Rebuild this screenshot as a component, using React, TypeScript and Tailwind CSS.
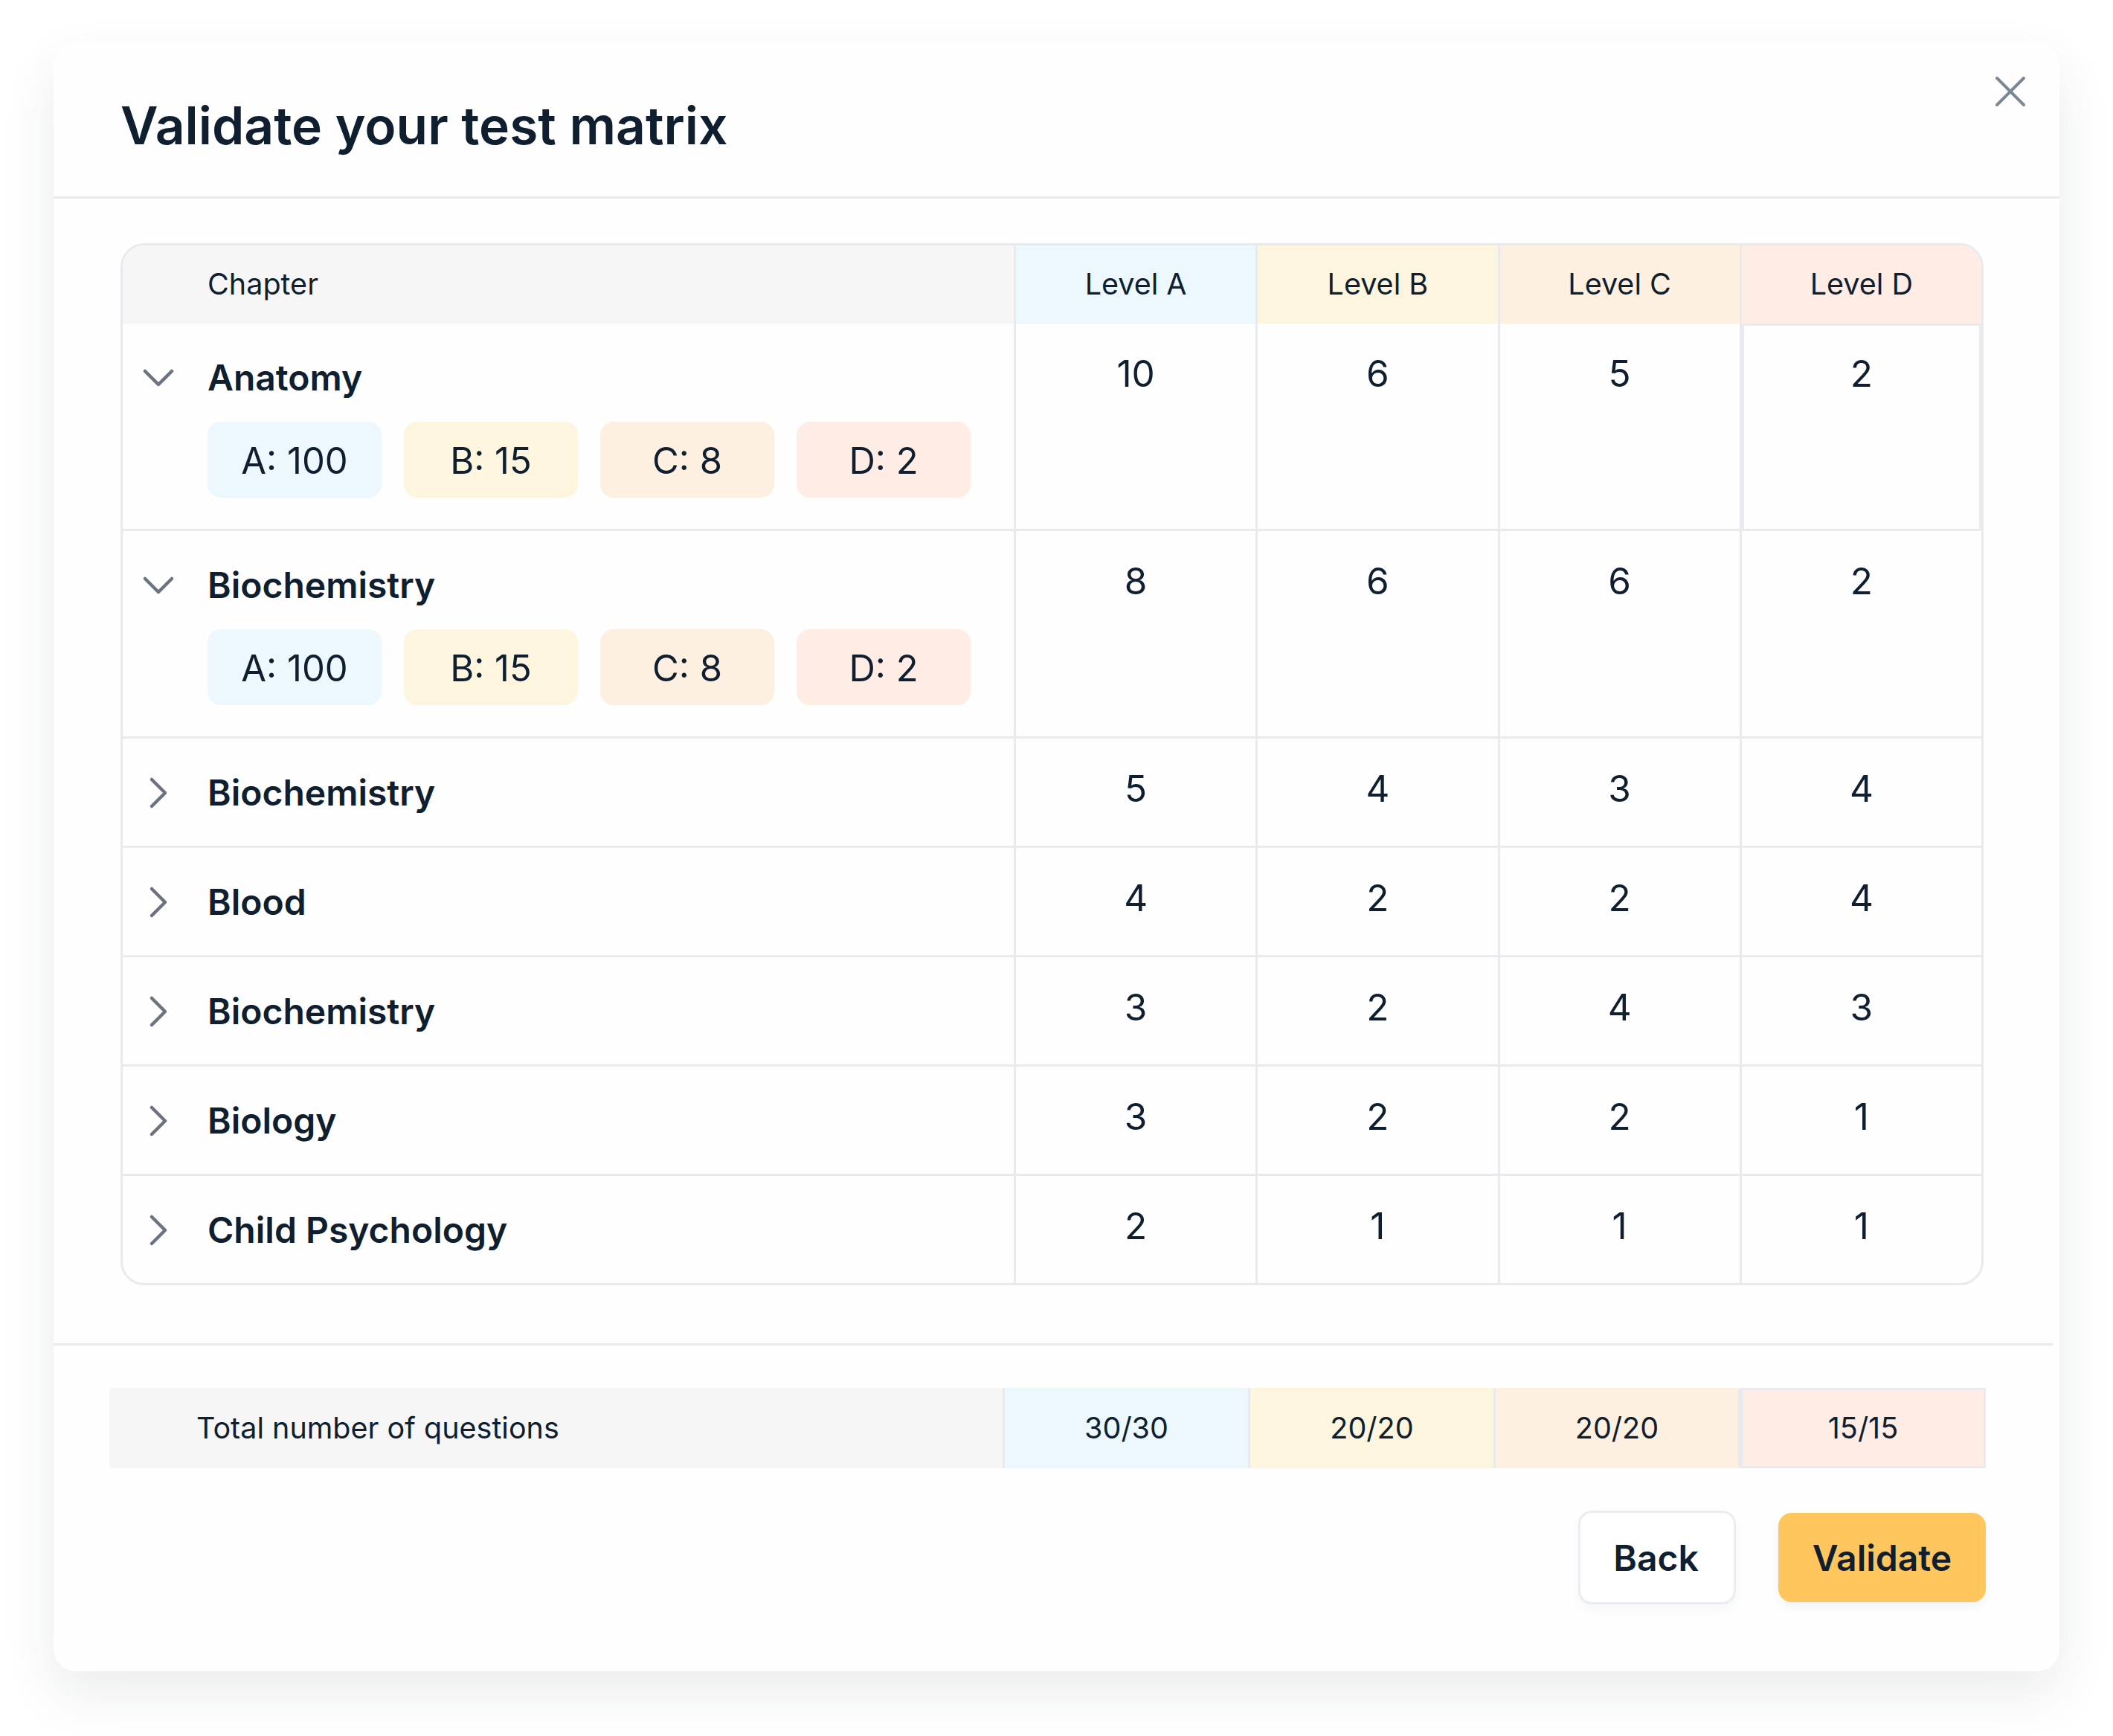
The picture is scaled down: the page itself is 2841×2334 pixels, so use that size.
import { ChevronDown, ChevronRight, X } from "lucide-react";

const levels = [
  { name: "Level A", bg: "bg-[#ecf8fd]" },
  { name: "Level B", bg: "bg-[#fef5df]" },
  { name: "Level C", bg: "bg-[#fef0e1]" },
  { name: "Level D", bg: "bg-[#feece5]" },
];

const pills = [
  { label: "A: 100", bg: "bg-[#ecf8fd]" },
  { label: "B: 15", bg: "bg-[#fef5df]" },
  { label: "C: 8", bg: "bg-[#fef0e1]" },
  { label: "D: 2", bg: "bg-[#feece5]" },
];

const rows = [
  { name: "Anatomy", open: true, values: [10, 6, 5, 2] },
  { name: "Biochemistry", open: true, values: [8, 6, 6, 2] },
  { name: "Biochemistry", open: false, values: [5, 4, 3, 4] },
  { name: "Blood", open: false, values: [4, 2, 2, 4] },
  { name: "Biochemistry", open: false, values: [3, 2, 4, 3] },
  { name: "Biology", open: false, values: [3, 2, 2, 1] },
  { name: "Child Psychology", open: false, values: [2, 1, 1, 1] },
];

const totals = ["30/30", "20/20", "20/20", "15/15"];

function Row({ row, index }: { row: (typeof rows)[number]; index: number }) {
  const last = index === rows.length - 1;
  return (
    <div className={`grid grid-cols-[1198px_repeat(4,325.25px)] ${last ? "" : "border-b-[3px] border-[#e8eaed]"} ${row.open ? "h-[279px]" : "h-[147px]"}`}>
      <div className="pl-[26px] pr-[30px] pt-[45px]">
        <div className="flex items-center gap-[44px]">
          <span className="flex h-[56px] w-[44px] items-center justify-center text-[#6b7280]">
            {row.open ? (
              <ChevronDown className="h-[72px] w-[72px] shrink-0" strokeWidth={1.5} />
            ) : (
              <ChevronRight className="h-[72px] w-[72px] shrink-0" strokeWidth={1.5} />
            )}
          </span>
          <span className="text-[48px] font-semibold leading-[56px]">{row.name}</span>
        </div>
        {row.open && (
          <div className="ml-[88px] mt-[31px] flex gap-[30px]">
            {pills.map((p) => (
              <span key={p.label} className={`flex h-[102px] w-[234px] items-center justify-center rounded-[18px] pt-[2px] text-[49px] leading-none ${p.bg}`}>
                {p.label}
              </span>
            ))}
          </div>
        )}
      </div>
      {row.values.map((v, i) => (
        <div
          key={i}
          className={`text-center text-[49.5px] leading-[58px] ${
            index === 0 && i === 3
              ? "border-l-[6px] border-r-[3px] border-t-[3px] border-[#e8eaed] pt-[35px]"
              : "border-l-[3px] border-[#e8eaed] pt-[38px]"
          }`}
        >
          {v}
        </div>
      ))}
    </div>
  );
}

export default function App() {
  return (
    <div className="min-h-[2334px] bg-white pl-[72px] pt-[57px] font-['Inter',sans-serif] text-[#0f1f30]">
      <div className="relative h-[2190px] w-[2697px] rounded-[30px] bg-[#fefefe] shadow-[0_30px_70px_rgba(30,40,60,0.09)]">
        <button type="button" className="absolute left-[2595px] top-[30px] text-[#7b8791]">
          <X className="h-[72px] w-[72px]" strokeWidth={1.33} />
        </button>

        <div className="flex h-[210px] items-center border-b-[3px] border-[#e8eaed] pl-[90px] pt-[19px]">
          <h1 className="text-[69.5px] font-semibold leading-none">Validate your test matrix</h1>
        </div>

        <div className="ml-[90px] mt-[60px] h-[1401px] w-[2505px] overflow-hidden rounded-[32px] border-[3px] border-[#e8eaed]">
          <div className="grid h-[105px] grid-cols-[1198px_repeat(4,325.25px)] text-[39.5px]">
            <div className="flex items-center bg-[#f6f6f6] pl-[114px]">Chapter</div>
            {levels.map((l) => (
              <div key={l.name} className={`flex items-center justify-center border-l-[3px] border-[#e8eaed] ${l.bg}`}>
                {l.name}
              </div>
            ))}
          </div>
          {rows.map((row, i) => (
            <Row key={i} row={row} index={i} />
          ))}
        </div>

        <div className="mr-[9px] mt-[78px] border-t-[3px] border-[#e8eaed]" />

        <div className="ml-[75px] mt-[57px] grid h-[108px] w-[2523px] grid-cols-[1201px_330px_330px_329px_333px] text-[39.5px]">
          <div className="flex items-center bg-[#f6f6f6] pl-[117px] pt-[2px]">Total number of questions</div>
          {totals.map((t, i) => (
            <div
              key={i}
              className={`flex items-center justify-center pt-[2px] ${levels[i].bg} ${
                i === 3 ? "border-y-[3px] border-l-[6px] border-r-[3px] border-[#e8eaed]" : "border-l-[3px] border-[#e8eaed]"
              }`}
            >
              {t}
            </div>
          ))}
        </div>

        <div className="ml-[2050px] mt-[57px] flex w-[548px] items-center justify-between">
          <button type="button" className="h-[126px] w-[212px] rounded-[18px] border-[3px] border-[#e9edf1] bg-white pr-[3px] pt-[2px] text-[48px] font-semibold shadow-[0_6px_14px_rgba(30,40,60,0.04)]">
            Back
          </button>
          <button type="button" className="h-[120px] w-[279px] rounded-[18px] bg-[#fec65d] pt-[2px] text-[48px] font-semibold shadow-[0_6px_14px_rgba(30,40,60,0.05)]">
            Validate
          </button>
        </div>
      </div>
    </div>
  );
}
